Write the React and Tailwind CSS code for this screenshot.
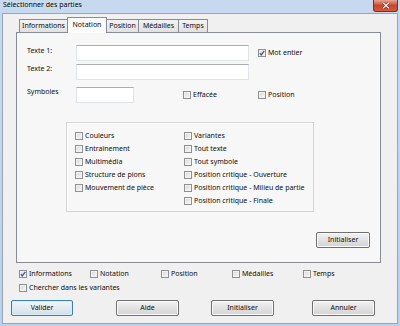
import React from "react";

function Cb({ checked }) {
  return (
    <span className="flex w-[8px] h-[8px] shrink-0 border border-[#8e9092] bg-linear-to-br from-[#d6d6d6] to-[#fafafa] shadow-[inset_0_0_0_1px_#f2f2f2] items-center justify-center">
      {checked && (
        <svg width="6" height="6" viewBox="0 0 6 6">
          <path d="M0.8 3.2 L2.3 4.9 L5.3 0.8" fill="none" stroke="#3b5a9a" strokeWidth="1.3" />
        </svg>
      )}
    </span>
  );
}

function Check({ label, checked, className = "" }) {
  return (
    <div className={"flex items-center gap-[2px] " + className}>
      <Cb checked={checked} />
      <span className="leading-[10px] whitespace-nowrap">{label}</span>
    </div>
  );
}

function Input({ className = "" }) {
  return (
    <div
      className={
        "h-[16px] bg-white border border-[#dfe3ea] border-t-[#abadb3] " + className
      }
    />
  );
}

function Btn({ children, className = "", primary }) {
  return (
    <div
      className={
        "h-[16px] rounded-[2px] border flex items-center justify-center leading-[10px] " +
        (primary
          ? "border-[#3c7fb1] bg-linear-to-b from-[#f1f6fa] to-[#d3dfea] shadow-[inset_0_0_0_1px_#d8ecf8] "
          : "border-[#707070] bg-linear-to-b from-[#f2f2f2] to-[#d3d3d3] shadow-[inset_0_0_0_1px_#fbfbfb] ") +
        className
      }
    >
      {children}
    </div>
  );
}

function Tab({ children, w, selected }) {
  if (selected) {
    return (
      <div
        className={
          "h-[16px] -mb-px z-10 bg-[#fcfcfc] border border-b-0 border-[#898c95] flex items-center justify-center leading-[10px] pb-[2px] -ml-px " +
          w
        }
      >
        {children}
      </div>
    );
  }
  return (
    <div
      className={
        "h-[13px] self-end border border-b-0 border-[#898c95] bg-linear-to-b from-[#f3f3f3] to-[#e1e1e1] flex items-center justify-center leading-[10px] -ml-px first:ml-0 " +
        w
      }
    >
      {children}
    </div>
  );
}

export default function App() {
  return (
    <div className="w-[400px] h-[326px] flex flex-col px-[2px] pb-[2px] bg-linear-to-b from-[#c6d9ee] to-[#bcd2ea] font-['Noto_Sans',sans-serif] text-[7px] text-[#0d0d0d] overflow-hidden">
      {/* title bar */}
      <div className="h-[13px] flex items-start justify-between shrink-0">
        <span className="pl-[1px] leading-[10px] pt-0 text-black [text-shadow:0_0_4px_#eef4fb]">
          Sélectionner des parties
        </span>
        <div className="w-[25px] h-[12px] rounded-b-[3px] border border-t-0 border-[#7b2f23] bg-linear-to-b from-[#e9a291] via-[#c8452c] to-[#d65a3c] flex items-center justify-center">
          <svg width="8" height="7" viewBox="0 0 8 7">
            <path d="M1 0.8 L7 6.2 M7 0.8 L1 6.2" stroke="#4a1a12" strokeWidth="2.2" />
            <path d="M1 0.8 L7 6.2 M7 0.8 L1 6.2" stroke="#ffffff" strokeWidth="1.2" />
          </svg>
        </div>
      </div>

      {/* client */}
      <div className="flex-1 border border-[#94a6bd] bg-[#f0f0f0] flex flex-col">
        {/* tabs */}
        <div className="mt-[3px] ml-[16px] h-[15px] flex items-end relative z-10">
          <Tab w="w-[49px]">Informations</Tab>
          <Tab w="w-[40px]" selected>Notation</Tab>
          <Tab w="w-[33px]">Position</Tab>
          <Tab w="w-[41px]">Médailles</Tab>
          <Tab w="w-[30px]">Temps</Tab>
        </div>

        {/* panel */}
        <div className="ml-[13px] w-[365px] h-[231px] border border-[#898c95] bg-[#f7f7f7] flex flex-col pt-[12px] pl-[10px]">
          {/* row 1 */}
          <div className="flex items-start">
            <span className="w-[49px] leading-[10px] pt-[1px]">Texte 1:</span>
            <Input className="w-[173px]" />
            <Check className="ml-[9px] mt-[3px]" label="Mot entier" checked />
          </div>
          {/* row 2 */}
          <div className="flex items-start mt-[3px]">
            <span className="w-[49px] leading-[10px] pt-0">Texte 2:</span>
            <Input className="w-[173px]" />
          </div>
          {/* row 3 */}
          <div className="flex items-start mt-[7px]">
            <span className="w-[49px] leading-[10px] pt-0">Symboles</span>
            <Input className="w-[58px]" />
            <Check className="ml-[49px] w-[75px] mt-[3px]" label="Effacée" />
            <Check className="mt-[3px]" label="Position" />
          </div>

          {/* group box */}
          <div className="mt-[19px] ml-[39px] w-[248px] border border-[#d5d5d5] shadow-[inset_1px_1px_0_#ffffff] pt-[6px] pb-[4px] pl-[8px] flex">
            <div className="w-[109px] flex flex-col">
              {["Couleurs", "Entraînement", "Multimédia", "Structure de pions", "Mouvement de pièce"].map((t) => (
                <Check key={t} className="h-[13px]" label={t} />
              ))}
            </div>
            <div className="flex flex-col">
              {[
                "Variantes",
                "Tout texte",
                "Tout symbole",
                "Position critique - Ouverture",
                "Position critique - Milieu de partie",
                "Position critique - Finale",
              ].map((t) => (
                <Check key={t} className="h-[13px]" label={t} />
              ))}
            </div>
          </div>

          <div className="flex justify-end pr-[10px] mt-[20px]">
            <Btn className="w-[54px]">Initialiser</Btn>
          </div>
        </div>

        {/* bottom checks */}
        <div className="mt-[4px] pl-[16px] flex">
          <Check className="w-[71px] h-[14px]" label="Informations" checked />
          <Check className="w-[71px] h-[14px]" label="Notation" />
          <Check className="w-[71px] h-[14px]" label="Position" />
          <Check className="w-[71px] h-[14px]" label="Médailles" />
          <Check className="w-[71px] h-[14px]" label="Temps" />
        </div>
        <div className="pl-[16px] flex">
          <Check className="h-[14px]" label="Chercher dans les variantes" />
        </div>

        {/* buttons */}
        <div className="mt-[5px] pl-[8px] flex">
          <Btn primary className="w-[62px]">Valider</Btn>
          <Btn className="w-[63px] ml-[43px]">Aide</Btn>
          <Btn className="w-[63px] ml-[32px]">Initialiser</Btn>
          <Btn className="w-[63px] ml-[38px]">Annuler</Btn>
        </div>
      </div>
    </div>
  );
}
